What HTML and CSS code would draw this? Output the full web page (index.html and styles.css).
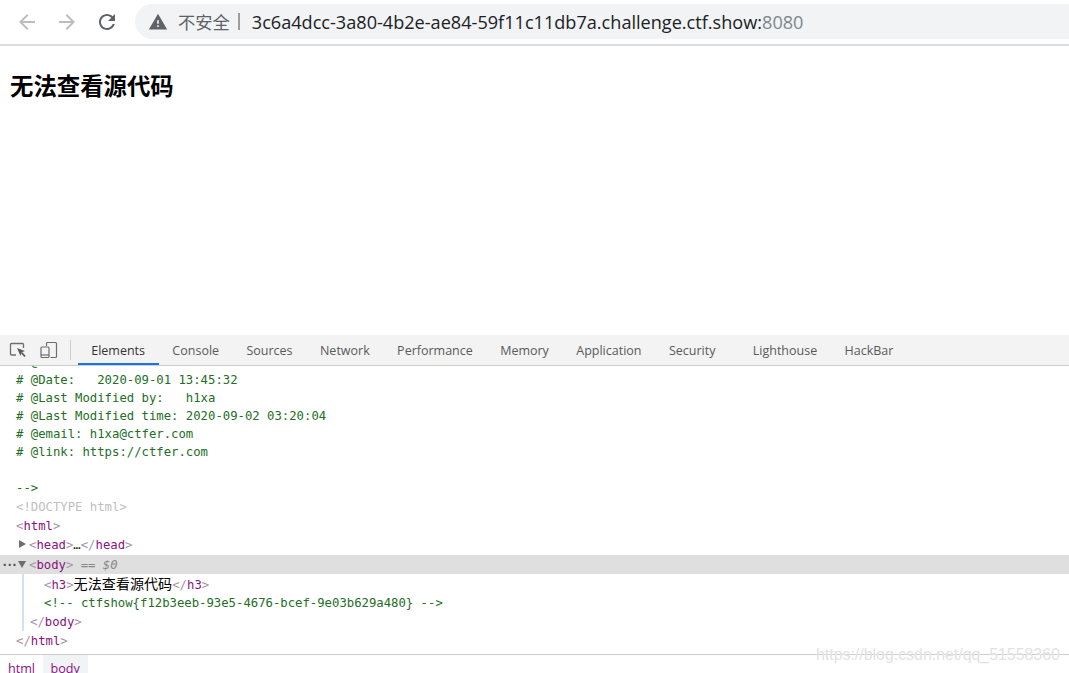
FILE: index.html
```html
<!DOCTYPE html>
<html lang="en">
<head>
    <meta charset="UTF-8">
    <title>无法查看源代码</title>
    <link rel="stylesheet" href="styles.css">
</head>
<body>

<header class="toolbar">
    <button class="nav-btn dim">
        <svg viewBox="0 0 24 24" width="24" height="24"><path d="M20 11H7.83l5.59-5.59L12 4l-8 8 8 8 1.41-1.41L7.83 13H20v-2z"/></svg>
    </button>
    <button class="nav-btn dim">
        <svg viewBox="0 0 24 24" width="24" height="24"><path d="M4 11h12.170l-5.590-5.590L12 4l8 8-8 8-1.410-1.410L16.170 13H4v-2z"/></svg>
    </button>
    <button class="nav-btn">
        <svg viewBox="0 0 24 24" width="24" height="24"><path d="M17.65 6.35C16.2 4.9 14.21 4 12 4c-4.42 0-7.99 3.58-7.99 8s3.57 8 7.99 8c3.73 0 6.84-2.55 7.73-6h-2.08c-.82 2.33-3.04 4-5.65 4-3.31 0-6-2.69-6-6s2.69-6 6-6c1.66 0 3.14.69 4.22 1.78L13 11h7V4l-2.35 2.35z"/></svg>
    </button>
    <div class="address">
        <svg class="warn" viewBox="0 0 24 24" width="20" height="20"><path d="M1 21h22L12 2 1 21zm12-3h-2v-2h2v2zm0-4h-2v-4h2v4z"/></svg>
        <span class="insecure">不安全</span>
        <span class="divider"></span>
        <span class="url">3c6a4dcc-3a80-4b2e-ae84-59f11c11db7a.challenge.ctf.show:<span class="port">8080</span></span>
    </div>
</header>

<main class="page">
    <h3>无法查看源代码</h3>
</main>

<section class="devtools">
    <div class="tabbar">
        <div class="tool-icons">
            <svg viewBox="0 0 18 18" width="18" height="18" fill="none" stroke="#6e6e6e" stroke-width="1.300">
                <path d="M7 14H2.500a1 1 0 0 1-1-1V3.500a1 1 0 0 1 1-1h11a1 1 0 0 1 1 1V7"/>
                <path d="M8 7l8 3-3.400 1.300L11.500 15z" fill="#5a5a5a" stroke="none"/>
                <path d="M12.500 11.500L16 15.500" stroke="#5a5a5a" stroke-width="1.800"/>
            </svg>
            <svg viewBox="0 0 18 18" width="18" height="18" fill="none" stroke="#6e6e6e" stroke-width="1.200">
                <path d="M6.500 5V2.500a1 1 0 0 1 1-1h8a1 1 0 0 1 1 1v13a1 1 0 0 1-1 1h-5"/>
                <rect x="1" y="6" width="8" height="10.500" rx="1"/>
                <path d="M1 14h8"/>
            </svg>
        </div>
        <nav class="tabs">
            <a class="tab active">Elements</a>
            <a class="tab">Console</a>
            <a class="tab">Sources</a>
            <a class="tab">Network</a>
            <a class="tab">Performance</a>
            <a class="tab">Memory</a>
            <a class="tab">Application</a>
            <a class="tab">Security</a>
            <a class="tab wide">Lighthouse</a>
            <a class="tab">HackBar</a>
        </nav>
    </div>

    <div class="code">
        <pre class="comment-block"># @Author:   h1xa
# @Date:   2020-09-01 13:45:32
# @Last Modified by:   h1xa
# @Last Modified time: 2020-09-02 03:20:04
# @email: h1xa@ctfer.com
# @link: https://ctfer.com

--&gt;</pre>
        <div class="row doctype">&lt;!DOCTYPE html&gt;</div>
        <div class="row"><span class="br">&lt;</span><span class="tag">html</span><span class="br">&gt;</span></div>
        <div class="row lvl1"><span class="arrow right"></span><span class="br">&lt;</span><span class="tag">head</span><span class="br">&gt;</span>…<span class="br">&lt;/</span><span class="tag">head</span><span class="br">&gt;</span></div>
        <div class="row lvl1 selected"><span class="dots">···</span><span class="arrow down"></span><span class="br">&lt;</span><span class="tag">body</span><span class="br">&gt;</span><span class="eq"> == $0</span></div>
        <div class="children">
            <div class="row lvl2"><span class="br">&lt;</span><span class="tag">h3</span><span class="br">&gt;</span><span class="cjk">无法查看源代码</span><span class="br">&lt;/</span><span class="tag">h3</span><span class="br">&gt;</span></div>
            <div class="row lvl2 green">&lt;!-- ctfshow{f12b3eeb-93e5-4676-bcef-9e03b629a480} --&gt;</div>
            <div class="row lvl1b"><span class="br">&lt;/</span><span class="tag">body</span><span class="br">&gt;</span></div>
        </div>
        <div class="row"><span class="br">&lt;/</span><span class="tag">html</span><span class="br">&gt;</span></div>
    </div>

    <div class="crumbs">
        <span class="crumb">html</span>
        <span class="crumb current">body</span>
    </div>
</section>

<div class="watermark">https://blog.csdn.net/qq_51558360</div>

</body>
</html>
```

FILE: styles.css
```css
html, body {
    height: 100%;
}

body {
    margin: 0;
    display: flex;
    flex-direction: column;
    height: 673px;
    overflow: hidden;
    background-color: #fff;
    font-family: "Open Sans", "Noto Sans CJK SC", sans-serif;
}

.toolbar {
    display: flex;
    align-items: flex-start;
    height: 40px;
    padding: 4px 0 0 7px;
    border-bottom: 2px solid #dcdce0;
    flex-shrink: 0;
}

.nav-btn {
    width: 40.200px;
    height: 35px;
    padding: 0;
    border: none;
    background: none;
    display: flex;
    align-items: center;
    justify-content: center;
    fill: #5f6368;
}

.nav-btn.dim {
    fill: #bdbdbd;
}

.address {
    flex: 1;
    display: flex;
    align-items: center;
    height: 35px;
    margin-left: 7.400px;
    padding-left: 13px;
    background-color: #f1f3f4;
    border-radius: 18px 0 0 18px;
    font-size: 18.120px;
    white-space: nowrap;
}

.warn {
    fill: #5f6368;
    margin-right: 10px;
}

.insecure {
    color: #5f6368;
    font-size: 17.300px;
}

.divider {
    width: 2px;
    height: 17px;
    background-color: #9a9da1;
    margin: 0 12px 0 8px;
}

.url {
    color: #202124;
}

.port {
    color: #80868b;
}

.page {
    flex: 1;
}

.page h3 {
    margin: 0;
    padding: 22px 0 0 10px;
    font-size: 23.400px;
    line-height: 34px;
    font-weight: bold;
    color: #000;
    font-family: "Noto Sans CJK SC", sans-serif;
}

.devtools {
    flex-shrink: 0;
    height: 338px;
    display: flex;
    flex-direction: column;
}

.tabbar {
    display: flex;
    height: 30px;
    background-color: #f3f3f3;
    border-bottom: 1px solid #cdcdcd;
    flex-shrink: 0;
}

.tool-icons {
    position: relative;
    display: flex;
    align-items: center;
    gap: 13px;
    width: 62px;
    margin-right: 6.500px;
    padding-left: 9px;
}

.tool-icons::after {
    content: "";
    position: absolute;
    right: 0;
    top: 5px;
    height: 20px;
    width: 1px;
    background-color: #ccc;
}

.tabs {
    display: flex;
}

.tab {
    padding: 1px 13.700px 0;
    line-height: 29px;
    height: 29px;
    font-size: 12.500px;
    color: #5a5a5a;
    white-space: nowrap;
}

.tab.active {
    color: #333;
    border-bottom: 2px solid #1a73e8;
    height: 27px;
    line-height: 29px;
}

.tab.wide {
    margin-left: 10px;
}

.code {
    flex: 1;
    overflow: hidden;
    font-family: "DejaVu Sans Mono", monospace;
    font-size: 12.280px;
    color: #222;
}

.comment-block {
    margin: -13px 0 0 0;
    padding-left: 16px;
    font: inherit;
    line-height: 18px;
    color: #236e25;
    white-space: pre;
    height: 144px;
}

.row {
    position: relative;
    height: 19.200px;
    line-height: 21px;
    padding-left: 16px;
    white-space: pre;
}

.lvl1 {
    padding-left: 29px;
}

.lvl1b {
    padding-left: 30px;
}

.lvl2 {
    padding-left: 44px;
}

.doctype {
    color: #c0c0c0;
}

.green {
    color: #236e25;
}

.br {
    color: #a894a6;
}

.tag {
    color: #881280;
}

.eq {
    color: #888;
    font-style: italic;
}

.cjk {
    font-family: "Noto Sans CJK SC", sans-serif;
    font-size: 14.100px;
    line-height: 19px;
    color: #000;
}

.selected {
    background-color: #dfdfdf;
}

.children {
    border-left: 2px solid #d4e0f5;
    margin-left: 22px;
    height: 57px;
}

.children .row {
    margin-left: -24px;
}

.arrow {
    position: absolute;
    left: 19px;
    top: 5px;
    width: 0;
    height: 0;
}

.arrow.right {
    border-left: 7px solid #6e6e6e;
    border-top: 4.500px solid transparent;
    border-bottom: 4.500px solid transparent;
}

.arrow.down {
    left: 18px;
    top: 6px;
    border-top: 7px solid #6e6e6e;
    border-left: 4.500px solid transparent;
    border-right: 4.500px solid transparent;
}

.dots {
    position: absolute;
    left: 1px;
    top: 0;
    font-weight: bold;
    letter-spacing: -2.500px;
    color: #555;
}

.crumbs {
    flex-shrink: 0;
    height: 18px;
    border-top: 1px solid #cdcdcd;
    display: flex;
    overflow: hidden;
    font-size: 12.600px;
    line-height: 27px;
    color: #881280;
}

.crumb {
    padding: 0 8px;
}

.crumb.current {
    background-color: #f1f3f4;
    padding: 0 8.500px 0 7.500px;
}

.watermark {
    position: absolute;
    left: 816px;
    top: 644px;
    font-family: "Liberation Sans", sans-serif;
    font-size: 15.900px;
    line-height: 22px;
    color: rgba(215, 215, 215, 0.75);
    text-shadow: 0 0 1px #fff;
    white-space: nowrap;
}
```
